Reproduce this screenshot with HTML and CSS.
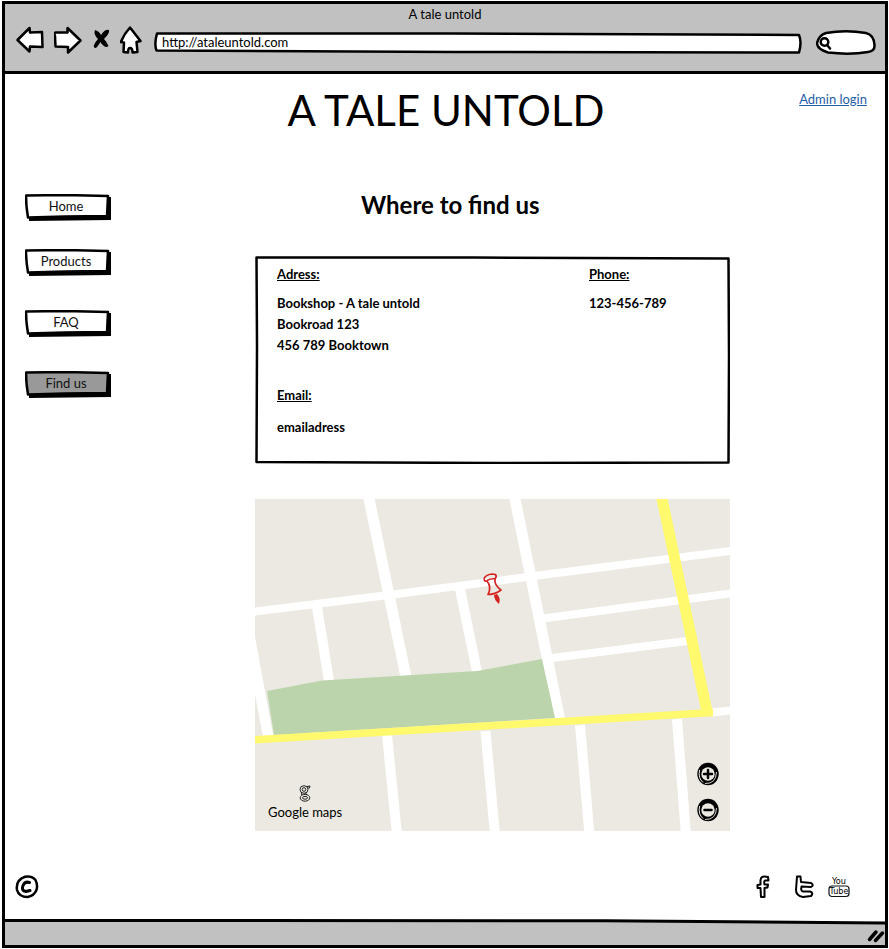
FILE: index.html
```html
<!DOCTYPE html>
<html lang="en">
<head>
<meta charset="utf-8">
<meta name="viewport" content="width=device-width, initial-scale=1">
<title>A tale untold</title>
<link rel="stylesheet" href="styles.css">
</head>
<body>
<div class="window">
  <header class="chrome">
    <div class="chrome-title">A tale untold</div>
    <div class="toolbar">
      <button class="icon-button" type="button" aria-label="Back">
        <svg width="28" height="28" viewBox="0 0 28 28"><path class="ink paper" d="M1.5 14 L13.500 2 L14 6.500 L26 6 L26.500 21 L14 20.500 L13.500 25.500 Z"/></svg>
      </button>
      <button class="icon-button" type="button" aria-label="Forward">
        <svg width="28" height="28" viewBox="0 0 28 28"><path class="ink paper" d="M26.500 14.500 L13.500 2 L13.500 6.500 L2 6.500 Q-0.500 7 1 10 L1.500 20.500 L14 21 L14 26.500 Z"/></svg>
      </button>
      <button class="icon-button" type="button" aria-label="Stop">
        <svg width="18" height="28" viewBox="0 0 18 28"><path d="M3 4 Q7 5 9 9 Q13 3 17 4 Q18 7 12 13 Q15 16 16.500 20 Q14 22 12 20 Q9 18 8.500 16 Q6 20 4 22 Q1 22 2 19 Q4 15 6 13 Q1 8 3 4 Z"/></svg>
      </button>
      <button class="icon-button" type="button" aria-label="Home page">
        <svg width="24" height="28" viewBox="0 0 24 28"><path class="ink paper" d="M10 1.500 L20.500 15 L16.500 16 L17.500 26 L12.500 26.500 Q12.500 22 10 22 Q8 22 8 26.500 L3.500 26 L4 16.500 L0.800 16 Q4 8 10 1.500 Z"/></svg>
      </button>
      <form class="address">
        <svg class="sketch" viewBox="0 0 648 22" preserveAspectRatio="none" aria-hidden="true"><path class="ink paper" d="M3 1.500 L300 1.500 L645 3 Q648 10 645 20.500 L300 20 L2.500 18.500 Q0 12 3 1.500 Z"/></svg>
        <input class="address-input" type="text" aria-label="Address" value="http://ataleuntold.com">
      </form>
      <form class="search">
        <svg class="sketch" viewBox="0 0 60 25" preserveAspectRatio="none" aria-hidden="true"><path class="ink paper" d="M10 3 Q30 -0.500 50 3 Q58 5 58.500 15 Q59 21 52 22 Q34 25 12 22.500 Q1 19 1 13 Q3 5 10 3 Z"/><circle class="ink" cx="8.500" cy="12" r="3.800"/><path class="ink" d="M11 15 L14 18.500"/></svg>
        <input class="search-input" type="search" aria-label="Search">
      </form>
    </div>
  </header>

  <div class="page">
    <div class="masthead">
      <h1 class="brand">A TALE UNTOLD</h1>
      <a class="admin-link" href="#admin">Admin login</a>
    </div>

    <div class="columns">
      <nav aria-label="Main">
        <ul class="menu">
          <li><a class="menu-link" href="#home"><svg class="sketch" viewBox="0 0 86 27" preserveAspectRatio="none" aria-hidden="true"><path d="M4 23 L82 23 L83 3 L86 3 L86 26 L4 27 Z"/><path class="ink face" d="M1 1.500 L40 1 L83 2 L82 22 L40 22.500 L3 23.500 Q1 12 1 1.500 Z"/></svg><span>Home</span></a></li>
          <li><a class="menu-link" href="#products"><svg class="sketch" viewBox="0 0 86 27" preserveAspectRatio="none" aria-hidden="true"><path d="M4 23 L82 23 L83 3 L86 3 L86 26 L4 27 Z"/><path class="ink face" d="M1 1.500 L40 1 L83 2 L82 22 L40 22.500 L3 23.500 Q1 12 1 1.500 Z"/></svg><span>Products</span></a></li>
          <li><a class="menu-link" href="#faq"><svg class="sketch" viewBox="0 0 86 27" preserveAspectRatio="none" aria-hidden="true"><path d="M4 23 L82 23 L83 3 L86 3 L86 26 L4 27 Z"/><path class="ink face" d="M1 1.500 L40 1 L83 2 L82 22 L40 22.500 L3 23.500 Q1 12 1 1.500 Z"/></svg><span>FAQ</span></a></li>
          <li><a class="menu-link current" href="#find" aria-current="page"><svg class="sketch" viewBox="0 0 86 27" preserveAspectRatio="none" aria-hidden="true"><path d="M4 23 L82 23 L83 3 L86 3 L86 26 L4 27 Z"/><path class="ink face" d="M1 1.500 L40 1 L83 2 L82 22 L40 22.500 L3 23.500 Q1 12 1 1.500 Z"/></svg><span>Find us</span></a></li>
        </ul>
      </nav>

      <main class="content">
        <h2 class="heading">Where to find us</h2>

        <section class="card" aria-label="Contact details">
          <svg class="sketch" viewBox="0 0 475 208" preserveAspectRatio="none" aria-hidden="true"><path class="ink" d="M1.500 1.500 L220 1.500 L473.500 2.500 L474 100 L473.500 206.500 L240 207 L1.500 206 L2 90 Z"/></svg>
          <div>
            <h3 class="label">Adress:</h3>
            <address class="lines">Bookshop - A tale untold<br>Bookroad 123<br>456 789 Booktown</address>
            <h3 class="label email-label">Email:</h3>
            <p class="lines">emailadress</p>
          </div>
          <div>
            <h3 class="label">Phone:</h3>
            <p class="lines">123-456-789</p>
          </div>
        </section>

        <section class="map" aria-label="Map">
          <svg class="map-drawing" viewBox="0 0 475 332" aria-hidden="true">
            <rect width="475" height="332" fill="#ebe9e1"/>
            <g fill="none" stroke="#fff">
              <path stroke-width="8" d="M-4 113 L138 95.500 L283 76.500 L479 51.500"/>
              <path stroke-width="11" d="M113 -5 L151 178 M259 -5 L305 222"/>
              <path stroke-width="10" d="M62 108 L74 182 M205 90 L222 173"/>
              <path stroke-width="8" d="M288 119.500 L479 94 M297 159 L432 142 M456 213.500 L479 211"/>
              <path stroke-width="10" d="M132 236 L142 336 M230.500 232 L240 336 M325 226 L334.500 336 M422 220 L431 336"/>
            </g>
            <path fill="#fff" d="M0 138 L18 236 L8 238 L0 195 Z"/>
            <path fill="#bcd4ac" d="M12 192 L67 181.500 L222 172 L287 160 L300 219 L19 236 Z"/>
            <path fill="none" stroke="#fef96d" stroke-width="11" d="M406 -5 L452.500 215"/>
            <path fill="none" stroke="#fef96d" stroke-width="7.500" d="M-4 241 L458 213.500"/>
            <g fill="none" stroke="#d42421" stroke-width="1.700" stroke-linejoin="round">
              <path d="M229 80 Q230 76 237 75 L240.500 75.500 Q242 78 240 79.500 Q233 80 232 82 Q229.500 83 229 80 M232 82 Q237 88 233 95.500 Q240 95.500 246 91 Q239 86 240 79.500"/>
              <path fill="#d42421" stroke="none" d="M239 96 L242 95 Q246 99 244 105 Q239 101 239 96 Z"/>
            </g>
          </svg>
          <div class="map-credit">
            <svg width="12" height="17" viewBox="0 0 12 17" aria-hidden="true"><g fill="none" stroke="#222" stroke-width="1"><ellipse cx="5" cy="4.500" rx="4" ry="3.800"/><ellipse cx="5" cy="4.500" rx="1.800" ry="1.800"/><path d="M8 1.500 L11 1 L10.500 3 L9 3 M3 8 Q1.500 9 3 10 M7 8 Q6 9 8 10"/><ellipse cx="6" cy="12.800" rx="4.800" ry="3.400"/><ellipse cx="6" cy="12.800" rx="2.500" ry="1.400"/></g></svg>
            <span>Google maps</span>
          </div>
          <div class="map-zoom">
            <button class="icon-button" type="button" aria-label="Zoom in">
              <svg width="22" height="24" viewBox="0 0 22 24"><ellipse cx="11" cy="12" rx="10.700" ry="11.300"/><path d="M2.600 8 Q0.800 16 6 20.500" fill="none" stroke="#ebe9e1" stroke-width="1"/><path d="M8 21.500 Q19 22 19.500 10" fill="none" stroke="#ebe9e1" stroke-width="0.900"/><circle cx="11" cy="12" r="6.700" fill="#ebe9e1"/><path class="ink" d="M7 12 L15 12 M11 8 L11 16"/></svg>
            </button>
            <button class="icon-button" type="button" aria-label="Zoom out">
              <svg width="22" height="24" viewBox="0 0 22 24"><ellipse cx="11" cy="12" rx="10.700" ry="11.300"/><path d="M2.600 8 Q0.800 16 6 20.500" fill="none" stroke="#ebe9e1" stroke-width="1"/><path d="M8 21.500 Q19 22 19.500 10" fill="none" stroke="#ebe9e1" stroke-width="0.900"/><circle cx="11" cy="12" r="6.700" fill="#ebe9e1"/><path class="ink" d="M7.500 12 L14.500 12"/></svg>
            </button>
          </div>
        </section>
      </main>
    </div>

    <footer class="site-footer">
      <svg width="24" height="24" viewBox="0 0 24 24" role="img" aria-label="Copyright"><g class="ink"><path d="M10 1.700 Q17 0.500 20.500 5 Q23 10 21.500 15 Q19 21 12.500 22 Q4 22 2 15 Q0.500 5 10 1.700 Z"/><path stroke-width="3" d="M14.500 7.500 Q10 6 8 10.500 Q6 16 11 16.500 L15 15.500"/></g></svg>
      <div class="social">
        <a href="#facebook" aria-label="Facebook"><svg width="14" height="24" viewBox="0 0 14 24"><path class="line" d="M12 2 Q5 0 4.500 5 L4.500 9.500 L1.500 10 L1.500 13 L4.500 13 L5 22 L8.500 22 L8.500 13 L11.500 12.500 L12 9.500 L8.500 9.500 Q7.500 5 10 5.500 L12.500 5.500 Z"/></svg></a>
        <a href="#twitter" aria-label="Twitter"><svg width="22" height="24" viewBox="0 0 22 24"><path class="line" d="M3 1.500 L6.500 1.500 L7 7 L17 8 Q20.500 10 17 12 L7.500 11.500 Q6.500 16 9 16.500 L16 16.500 Q20 18 17 21 L9 22 Q2 21 2 15 Z"/></svg></a>
        <a href="#youtube" aria-label="YouTube"><svg width="22" height="24" viewBox="0 0 22 24"><text class="logo-text" x="11" y="9" text-anchor="middle">You</text><rect x="1" y="11" width="20" height="10.500" rx="3" fill="none" stroke="#111" stroke-width="1.200"/><text class="logo-text" x="11" y="19" text-anchor="middle">Tube</text></svg></a>
      </div>
    </footer>
  </div>

  <div class="status-bar">
    <svg class="status-line" viewBox="0 0 880 6" preserveAspectRatio="none" aria-hidden="true"><path fill="#fff" d="M0 0 H880 V3.500 L600 1.500 L0 1 Z"/><path fill="none" stroke="#000" stroke-width="3" d="M0 1.500 L600 1.700 L880 4"/></svg>
    <svg width="18" height="14" viewBox="0 0 18 14" aria-hidden="true"><path fill="none" stroke="#000" stroke-width="3.500" stroke-linecap="round" d="M2.500 10.500 L9 3 M8.500 11.500 L15.500 4"/></svg>
  </div>
</div>
</body>
</html>
```

FILE: styles.css
```css
* {
  box-sizing: border-box;
}

body {
  margin: 0;
  background: #fff;
  color: #000;
  font: 13px/21px Lato, "Open Sans", sans-serif;
}

h1,
h2,
h3,
p,
ul {
  margin: 0;
  padding: 0;
}

svg {
  display: block;
}

.window {
  display: flex;
  flex-direction: column;
  min-height: calc(100vh - 2px);
  margin: 1px 1px 1px 2px;
  border: 3px solid #000;
}

/* Hand-drawn outlines */
.ink {
  fill: none;
  stroke: #000;
  stroke-width: 2.5;
  stroke-linecap: round;
  stroke-linejoin: round;
}

.paper {
  fill: #fff;
}

.line {
  fill: #fff;
  stroke: #000;
  stroke-width: 2;
  stroke-linejoin: round;
}

.sketch {
  position: absolute;
  inset: 0;
  width: 100%;
  height: 100%;
  pointer-events: none;
}

.icon-button {
  flex: none;
  padding: 0;
  border: 0;
  background: none;
  cursor: pointer;
}

/* Browser chrome */
.chrome {
  padding-bottom: 16px;
  border-bottom: 3px solid #000;
  background: #c1c1c1;
}

.chrome-title {
  line-height: 20px;
  text-align: center;
}

.toolbar {
  display: flex;
  align-items: center;
  gap: 10px;
  padding: 0 9px 0 11px;
}

.address,
.search {
  position: relative;
  height: 22px;
  margin: 6px 0 0;
}

.address {
  flex: 1;
  min-width: 0;
}

.search {
  flex: none;
  width: 60px;
  height: 25px;
  margin-left: 4px;
}

.address-input,
.search-input {
  position: relative;
  width: 100%;
  height: 100%;
  padding: 0 8px;
  border: 0;
  outline: 0;
  background: none;
  color: #000;
  font: inherit;
}

.address-input {
  padding-bottom: 2px;
}

.search-input {
  padding-left: 18px;
}

/* Page */
.page {
  display: flex;
  flex: 1;
  flex-direction: column;
}

.masthead {
  display: grid;
  grid-template-columns: 1fr auto 1fr;
  padding: 15px 18px 0 20px;
}

.brand {
  grid-column: 2;
  font-size: 42px;
  font-weight: 400;
  line-height: 42px;
}

.admin-link {
  justify-self: end;
  color: #1f5ea8;
}

.columns {
  display: grid;
  grid-template-columns: 86px minmax(0, 1fr);
  gap: 144px;
  padding: 60px 155px 0 20px;
}

.menu {
  padding-top: 3px;
  list-style: none;
}

.menu li + li {
  margin-top: 34px;
}

.menu li:first-child + li {
  margin-top: 28px;
}

.menu-link {
  position: relative;
  display: block;
  height: 27px;
  padding-right: 4px;
  color: #111;
  line-height: 25px;
  text-align: center;
  text-decoration: none;
}

.menu-link span {
  position: relative;
}

.face {
  fill: #fff;
}

.current .face {
  fill: #999;
}

.heading {
  padding-left: 106px;
  font-size: 24px;
  line-height: 28px;
}

.card {
  position: relative;
  display: grid;
  grid-template-columns: 312px 1fr;
  min-height: 208px;
  margin-top: 37px;
  padding: 8px 22px 24px;
}

.label {
  font-size: 13px;
  text-decoration: underline;
}

.lines {
  margin-top: 8px;
  font-style: normal;
  font-weight: 700;
}

.email-label {
  margin-top: 29px;
}

.email-label + .lines {
  margin-top: 11px;
}

/* Map */
.map {
  position: relative;
  margin-top: 35px;
}

.map-drawing {
  width: 100%;
  height: auto;
}

.map-credit {
  position: absolute;
  bottom: 8px;
  left: 13px;
  display: flex;
  flex-direction: column;
  align-items: center;
}

.map-zoom {
  position: absolute;
  right: 11px;
  bottom: 9px;
  display: grid;
  gap: 12px;
}

/* Footer */
.site-footer {
  display: flex;
  align-items: center;
  justify-content: space-between;
  margin-top: auto;
  padding: 20px 35px 20px 10px;
}

.social {
  display: flex;
  gap: 12px;
}

.social a:first-child {
  margin-right: 12px;
}

.logo-text {
  font: 9px "Liberation Sans Narrow", "DejaVu Sans Condensed", sans-serif;
}

.status-bar {
  position: relative;
  display: flex;
  align-items: center;
  justify-content: flex-end;
  height: 26px;
  padding: 8px 0 0;
  background: #c1c1c1;
}

.status-line {
  position: absolute;
  top: 0;
  left: 0;
  width: 100%;
  height: 6px;
}
```
